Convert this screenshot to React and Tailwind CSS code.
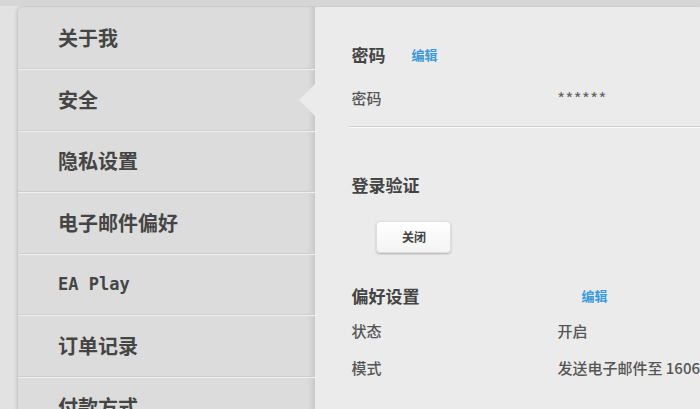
import React from 'react';

const cjk = { fontFamily: '"Noto Sans CJK SC", "Noto Sans", sans-serif' };

const MENU = ['关于我', '安全', '隐私设置', '电子邮件偏好', 'EA Play', '订单记录', '付款方式'];

const Row = ({ label, value, valueClass = '' }) => (
  <div className="flex items-center h-[37px] text-[15px] font-medium text-[#555]">
    <div className="w-[206px]">{label}</div>
    <div className={`whitespace-nowrap ${valueClass}`}>{value}</div>
  </div>
);

export default function App() {
  return (
    <div className="w-[700px] h-[409px] overflow-hidden bg-[#e2e2e2] border-t-[6px] border-[#d6d6d6]" style={cjk}>
      <div className="flex ml-[18px] mt-[1px] h-[420px] rounded-tl-[6px] shadow-[0_0_4px_rgba(0,0,0,0.25)] overflow-hidden">
        {/* sidebar */}
        <div className="relative w-[298px] bg-[#dcdcdc] shadow-[inset_-6px_0_6px_-4px_rgba(0,0,0,0.12)]">
          {MENU.map((item, i) => (
            <div
              key={item}
              className={`relative flex items-center pl-[40px] ${i === 0 ? 'h-[62px]' : 'h-[61.5px] border-t border-[#f0f0f0]'} border-b border-b-[#cdcdcd] text-[20px] font-bold text-[#454545]`}
              style={item === 'EA Play' ? { fontFamily: '"DejaVu Sans Mono", monospace', fontSize: '17px' } : undefined}
            >
              {item}
              {i === 1 && (
                <div className="absolute right-0 top-1/2 -translate-y-1/2 w-0 h-0 border-y-[16px] border-y-transparent border-r-[16px] border-r-[#ebebeb]" />
              )}
            </div>
          ))}
        </div>

        {/* content */}
        <div className="flex-1 bg-[#ebebeb] pl-[36px] pt-[29px]">
          <div className="flex items-center h-[38px]">
            <span className="text-[17px] font-bold text-[#444]">密码</span>
            <span className="ml-[26px] text-[13px] font-bold text-[#3a9ad9]">编辑</span>
          </div>
          <div className="mt-[6px]">
            <Row label="密码" value="******" valueClass="text-[#666] tracking-[1px]" />
          </div>
          <div className="mt-[9px] -ml-[2px] border-t border-[#cfcfcf] border-b border-b-[#fafafa]" />

          <div className="mt-[43px] text-[17px] font-bold text-[#444] h-[28px] flex items-center">登录验证</div>
          <div className="mt-[22px] ml-[25px] w-[75px] h-[32px] flex items-center justify-center rounded-[4px] bg-gradient-to-b from-white to-[#f3f3f3] border border-[#dedede] shadow-[0_1px_2px_rgba(0,0,0,0.25)] text-[12px] font-bold text-[#444]">
            关闭
          </div>

          <div className="mt-[28px] flex items-center h-[30px]">
            <span className="w-[230px] text-[17px] font-bold text-[#444]">偏好设置</span>
            <span className="text-[13px] font-bold text-[#3a9ad9]">编辑</span>
          </div>
          <div className="mt-[2px]">
            <Row label="状态" value="开启" />
            <Row label="模式" value="发送电子邮件至 1606" />
          </div>
        </div>
      </div>
    </div>
  );
}
